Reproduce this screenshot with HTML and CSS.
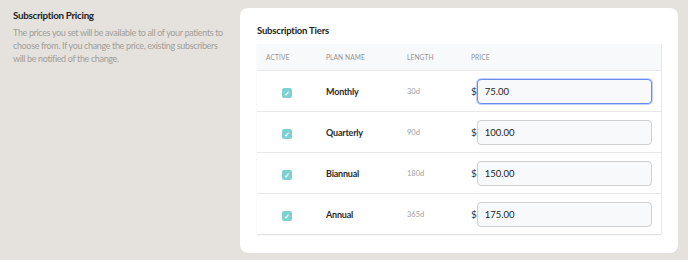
FILE: index.html
```html
<!DOCTYPE html>
<html lang="en">

<head>
    <meta charset="UTF-8">
    <meta name="viewport" content="width=device-width, initial-scale=1.0">
    <title>Subscription Pricing</title>
    <link rel="stylesheet" href="styles.css">
</head>

<body>
    <div class="page">
        <div class="intro">
            <h2>Subscription Pricing</h2>
            <p>The prices you set will be available to all of your patients to<br>choose from. If you change the price, existing subscribers<br>will be notified of the change.</p>
        </div>

        <div class="card">
            <h3>Subscription Tiers</h3>
            <div class="tiers">
                <div class="row head">
                    <div class="cell active">Active</div>
                    <div class="cell">Plan Name</div>
                    <div class="cell">Length</div>
                    <div class="cell">Price</div>
                </div>

                <div class="row">
                    <div class="cell active"><span class="check">&#10003;</span></div>
                    <div class="cell name">Monthly</div>
                    <div class="cell length">30d</div>
                    <div class="cell price">$<input class="price-input focused" type="text" value="75.00"></div>
                </div>

                <div class="row">
                    <div class="cell active"><span class="check">&#10003;</span></div>
                    <div class="cell name">Quarterly</div>
                    <div class="cell length">90d</div>
                    <div class="cell price">$<input class="price-input" type="text" value="100.00"></div>
                </div>

                <div class="row">
                    <div class="cell active"><span class="check">&#10003;</span></div>
                    <div class="cell name">Biannual</div>
                    <div class="cell length">180d</div>
                    <div class="cell price">$<input class="price-input" type="text" value="150.00"></div>
                </div>

                <div class="row">
                    <div class="cell active"><span class="check">&#10003;</span></div>
                    <div class="cell name">Annual</div>
                    <div class="cell length">365d</div>
                    <div class="cell price">$<input class="price-input" type="text" value="175.00"></div>
                </div>
            </div>
        </div>
    </div>
</body>

</html>
```

FILE: styles.css
```css
body {
    font-family: 'Lato', 'Noto Sans', sans-serif;
    background-color: #e5e2dd;
    color: #2b2b2b;
    margin: 0;
}

.page {
    display: flex;
    padding: 8px 10px 8px 13px;
    gap: 2px;
}

.intro {
    width: 225px;
}

.intro h2 {
    margin: 1px 0 0;
    font-size: 9.8px;
    font-weight: 700;
    letter-spacing: -0.3px;
    color: #222222;
}

.intro p {
    margin: 5px 0 0;
    font-size: 9px;
    line-height: 13px;
    letter-spacing: -0.35px;
    white-space: nowrap;
    color: #a19e99;
}

.card {
    flex: 1;
    background-color: #ffffff;
    border-radius: 8px;
    padding: 17px 17px 19px;
}

.card h3 {
    margin: 0 0 8px;
    font-size: 9.5px;
    font-weight: 700;
    letter-spacing: -0.2px;
    color: #222222;
}

.tiers {
    box-shadow: 0 1px 1px rgba(0, 0, 0, 0.12), 1px 0 0 #eeeeee;
}

.row {
    display: grid;
    grid-template-columns: 69px 81px 64px 1fr;
    align-items: center;
    height: 40px;
    border-top: 1px solid #e8e8e8;
    padding-right: 9px;
}

.row.head {
    height: 26px;
    border-top: none;
    background-color: #f8f9fb;
    border-bottom: 1px solid #e8e8e8;
    font-size: 6.6px;
    letter-spacing: 0.1px;
    text-transform: uppercase;
    color: #929292;
}

.row.head + .row {
    border-top: none;
}

.cell.active {
    padding-left: 9px;
}

.row .cell.active .check {
    margin-left: 16px;
}

.check {
    display: inline-flex;
    align-items: center;
    justify-content: center;
    width: 10px;
    height: 10px;
    border-radius: 2px;
    background-color: #7dd1d2;
    color: #ffffff;
    font-size: 7px;
    font-weight: 700;
    vertical-align: middle;
}

.name {
    font-size: 9px;
    font-weight: 700;
    letter-spacing: -0.2px;
    color: #2b2b2b;
}

.length {
    font-size: 7.5px;
    color: #a0a0a0;
}

.price {
    display: flex;
    align-items: center;
    font-size: 10px;
    color: #333333;
}

.price-input {
    flex: 1;
    height: 25px;
    box-sizing: border-box;
    border: 1px solid #cfcfcf;
    border-radius: 4px;
    background-color: #f8f9fb;
    padding: 0 7px;
    font-family: inherit;
    font-size: 9.5px;
    color: #222222;
    outline: none;
}

.price-input.focused {
    border: 1px solid #6a8cf0;
    box-shadow: 0 0 0 1px rgba(106, 140, 240, 0.4);
}
```
